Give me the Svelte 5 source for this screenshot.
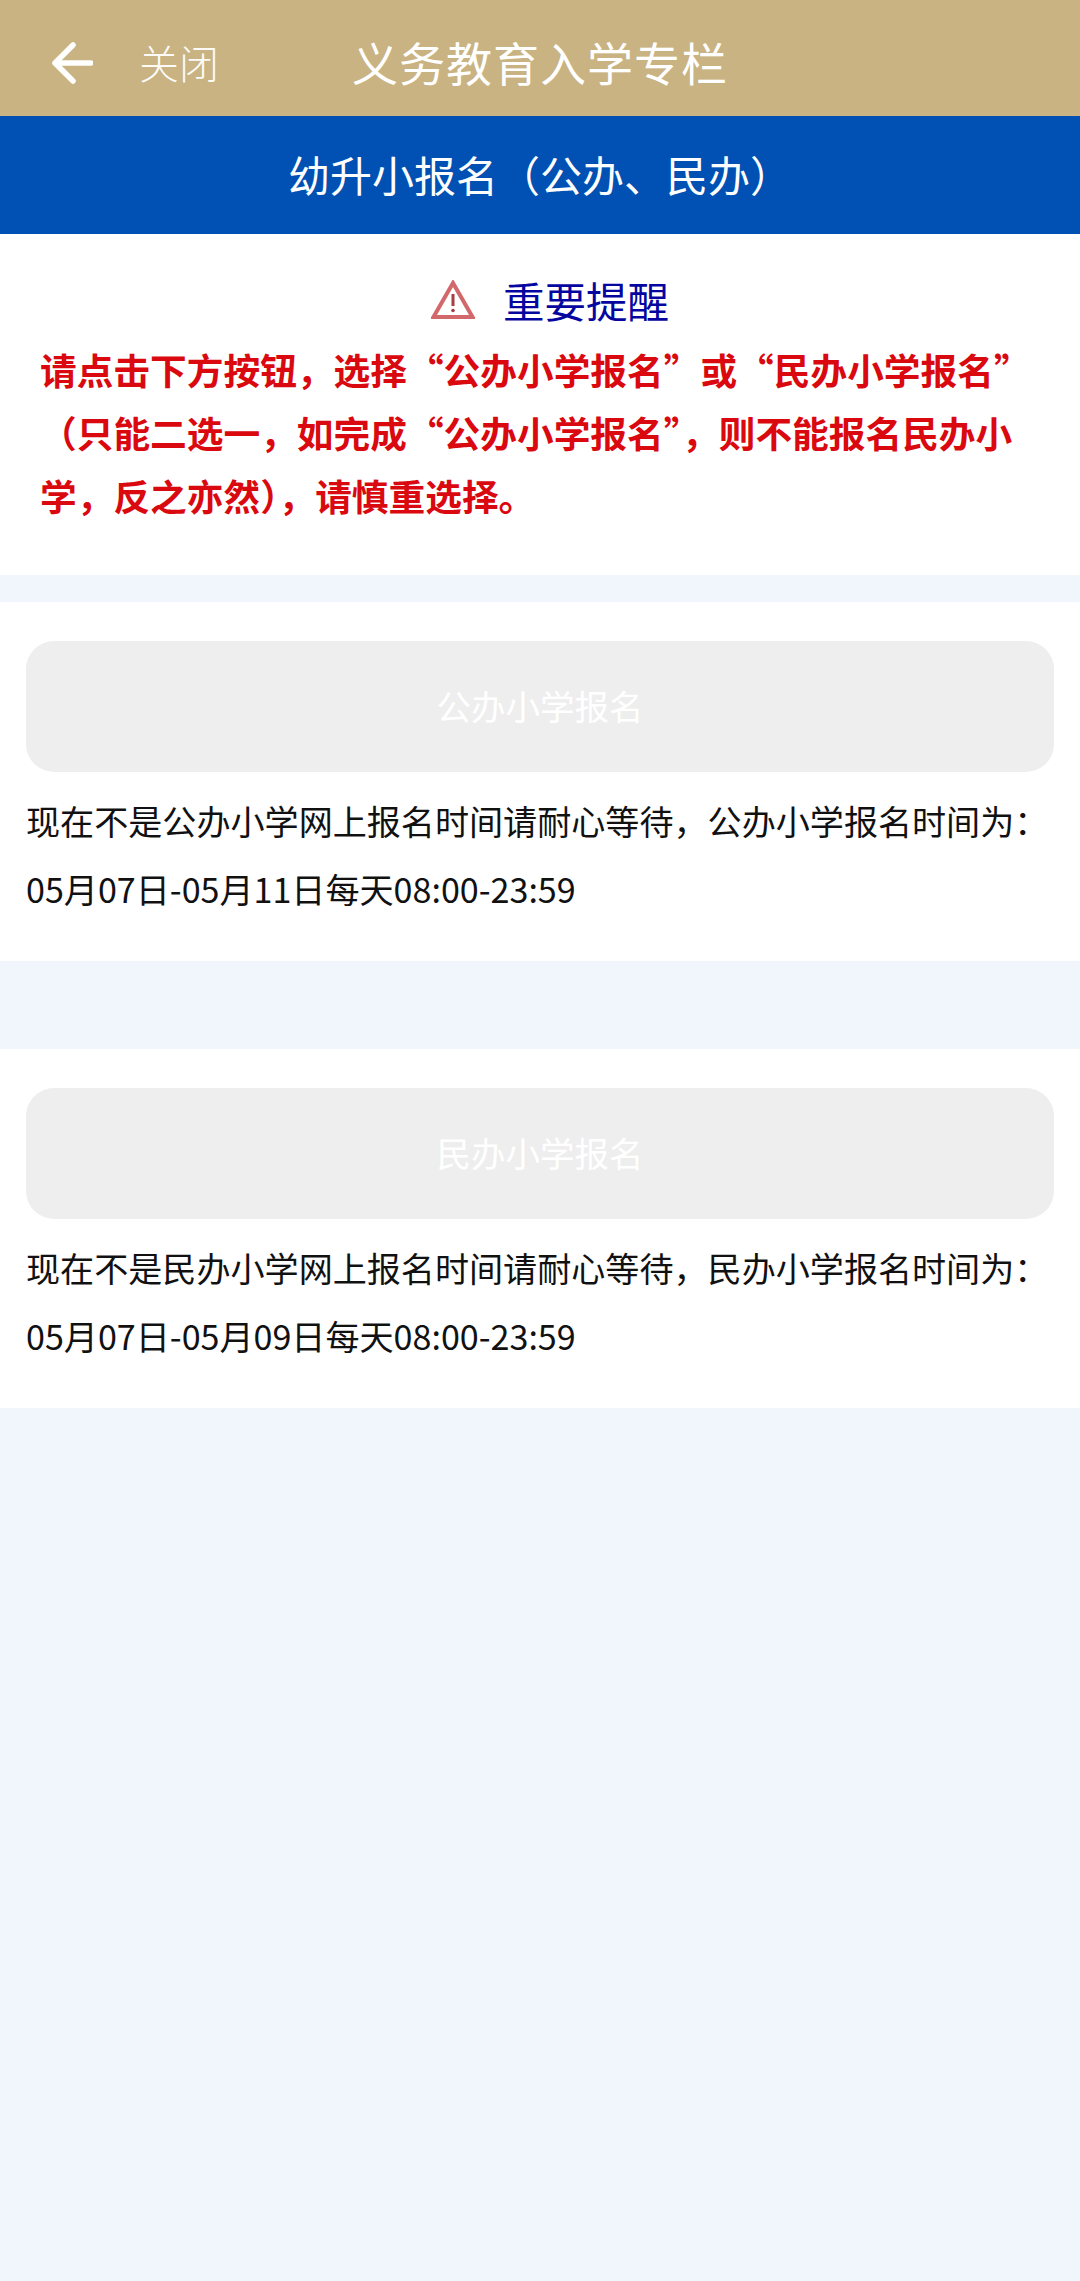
<script>
  const notices = [
    { label: '公办小学报名', line1: '现在不是公办小学网上报名时间请耐心等待，公办小学报名时间为：', line2: '05月07日-05月11日每天08:00-23:59' },
    { label: '民办小学报名', line1: '现在不是民办小学网上报名时间请耐心等待，民办小学报名时间为：', line2: '05月07日-05月09日每天08:00-23:59' }
  ];
</script>

<div class="page">
  <header class="topbar">
    <div class="left">
      <svg class="back" viewBox="0 0 44 44" width="44" height="44" aria-hidden="true">
        <path d="M42 23H6M24 5 6 23l18 18" fill="none" stroke="#fff" stroke-width="5.5" stroke-linecap="round" stroke-linejoin="round"/>
      </svg>
      <span class="close">关闭</span>
    </div>
    <h1>义务教育入学专栏</h1>
  </header>
  <div class="subbar">幼升小报名（公办、民办）</div>

  <section class="reminder">
    <div class="rem-title">
      <svg viewBox="0 0 44 40" width="44" height="40" aria-hidden="true">
        <path d="M22 3 2.5 37h39z" fill="none" stroke="#d2686c" stroke-width="4" stroke-linejoin="miter"/>
        <path d="M22 14v12" stroke="#a83c42" stroke-width="3"/>
        <circle cx="22" cy="30.5" r="1.8" fill="#a83c42"/>
      </svg>
      <span>重要提醒</span>
    </div>
    <p class="warn">请点击下方按钮，选择“公办小学报名”或“民办小学报名”<br />（只能二选一，如完成“公办小学报名”，则不能报名民办小学，反之亦然），请慎重选择。</p>
  </section>

  {#each notices as n}
    <section class="card">
      <button class="apply" disabled>{n.label}</button>
      <p class="info">{n.line1}<br />{n.line2}</p>
    </section>
  {/each}
</div>

<style>
  :global(body) {
    margin: 0;
    background: #f1f6fd;
  }
  .page {
    min-height: 2281px;
    background: #f1f6fd;
    font-family: "Noto Sans CJK SC", "Noto Sans", sans-serif;
  }
  .topbar {
    height: 116px;
    padding-top: 6px;
    box-sizing: border-box;
    background: #c9b382;
    color: #fff;
    display: flex;
    align-items: center;
    justify-content: center;
    position: relative;
  }
  .left {
    position: absolute;
    left: 49px;
    top: 8px;
    bottom: 0;
    display: flex;
    align-items: center;
    gap: 46px;
  }
  .close {
    font-size: 40px;
    font-weight: 300;
    opacity: 0.95;
  }
  h1 {
    margin: 0;
    font-size: 46px;
    font-weight: 400;
    letter-spacing: 1px;
  }
  .subbar {
    height: 118px;
    padding-bottom: 3px;
    box-sizing: border-box;
    background: #0051b3;
    color: #fff;
    font-size: 42px;
    display: flex;
    align-items: center;
    justify-content: center;
  }
  .reminder {
    background: #fff;
    height: 341px;
    padding: 38px 40px 0;
    box-sizing: border-box;
  }
  .rem-title {
    display: flex;
    align-items: center;
    justify-content: center;
    gap: 28px;
    font-size: 41.5px;
    line-height: 56px;
    color: #0505a0;
    padding-left: 20px;
  }
  .warn {
    margin: 10px 0 0;
    color: #d9090f;
    font-size: 36.7px;
    font-weight: 700;
    line-height: 63px;
  }
  .card {
    background: #fff;
    height: 359px;
    margin-top: 27px;
    padding: 39px 26px 0;
    box-sizing: border-box;
  }
  .card + .card {
    margin-top: 88px;
  }
  .apply {
    display: block;
    width: 100%;
    height: 131px;
    border: 0;
    border-radius: 28px;
    background: #eeeeee;
    color: #fff;
    font: inherit;
    font-size: 34.5px;
    padding: 0 0 4px;
  }
  .info {
    margin: 14px 0 0;
    color: #111;
    font-size: 34.1px;
    line-height: 68px;
  }
</style>
